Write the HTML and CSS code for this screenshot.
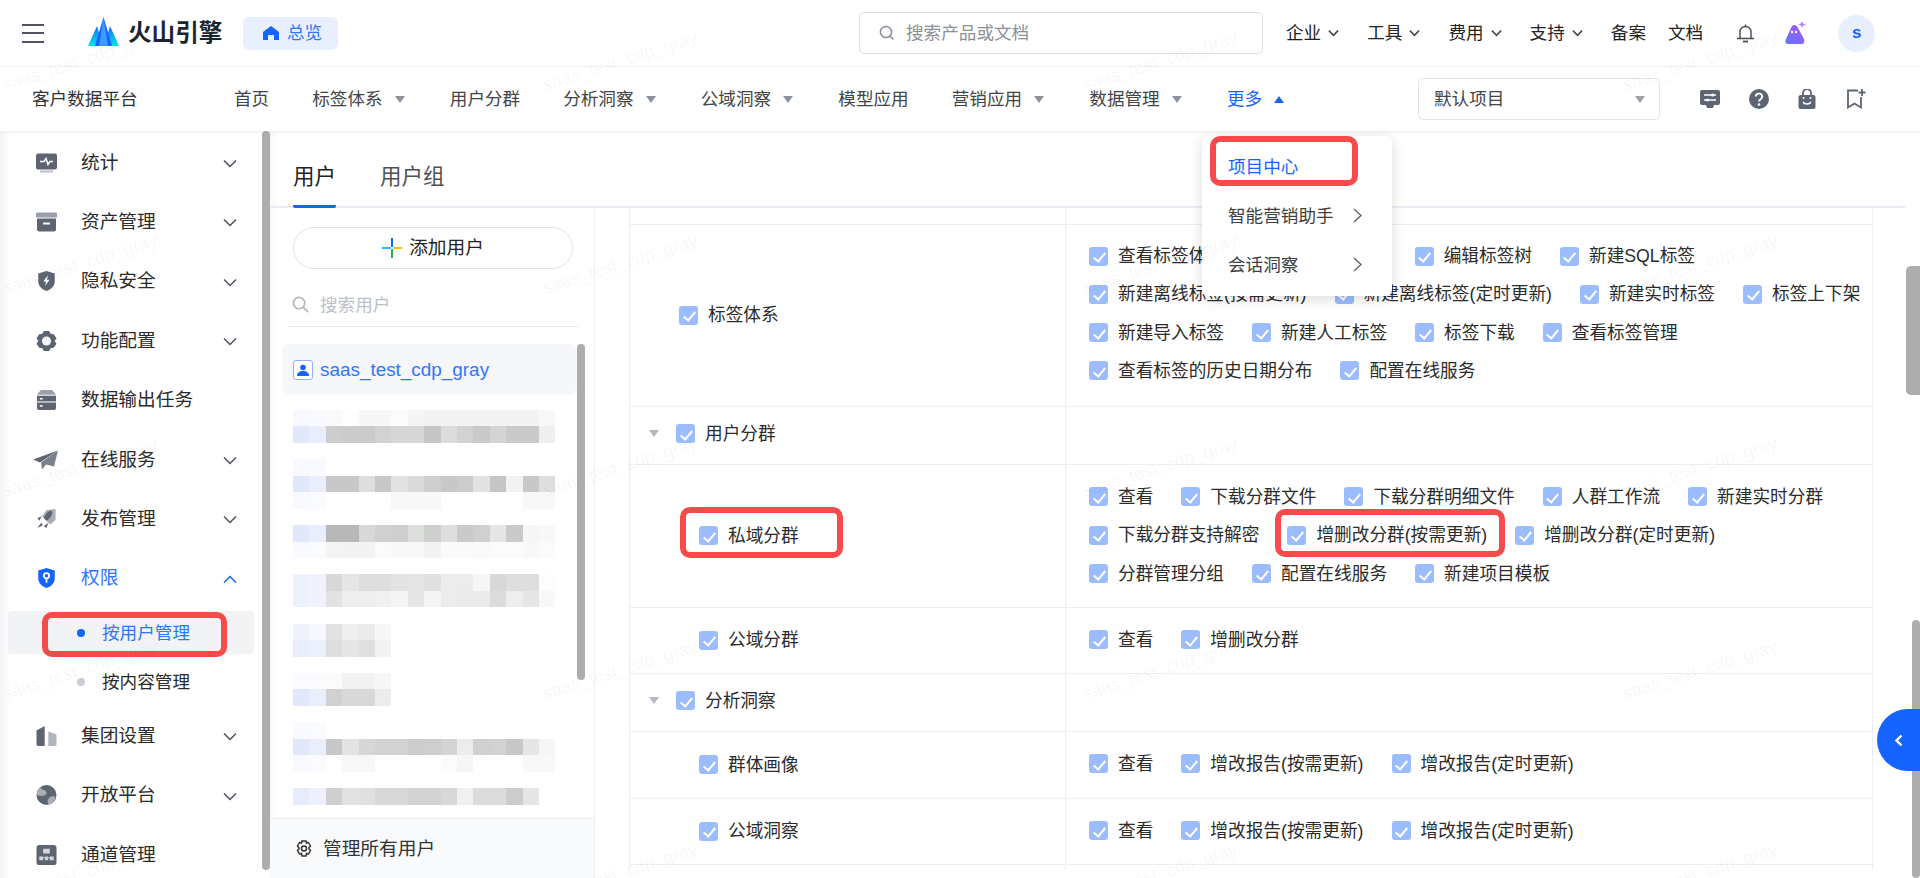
FILE: index.html
```html
<!DOCTYPE html>
<html lang="zh-CN">
<head>
<meta charset="utf-8">
<title>客户数据平台</title>
<link rel="stylesheet" href="styles.css">
</head>
<body>
<header class="top">
  <div class="burger"><i></i><i></i><i></i></div>
  <svg class="logo" viewBox="0 0 31 29"><defs><linearGradient id="lg" x1="0" y1="0" x2="0" y2="1"><stop offset="0" stop-color="#1a6dff"/><stop offset="1" stop-color="#00e5e5"/></linearGradient></defs><path d="M9 9l6 20H0z" fill="url(#lg)"/><path d="M22 9l9 20H16z" fill="url(#lg)"/><path d="M15.500 0L24 29H7z" fill="#1664ff"/><path d="M15.500 0L20 29h-9z" fill="#3b9bff"/></svg>
  <span class="brand">火山引擎</span>
  <a class="overview"><svg viewBox="0 0 16 14" class="home"><path d="M8 0l8 6v8h-5V9H5v5H0V6z" fill="#1664ff"/></svg>总览</a>
  <div class="gsearch"><svg class="gs-ico" viewBox="0 0 16 16"><circle cx="7" cy="7" r="5.600" fill="none" stroke="#878d96" stroke-width="1.500"/><path d="M11 11l3.500 3.500" stroke="#878d96" stroke-width="1.500"/></svg><span>搜索产品或文档</span></div>
  <nav class="topnav">
    <a>企业<svg class="chev" viewBox="0 0 12 8"><path d="M1 1.500l5 5 5-5" /></svg></a>
    <a>工具<svg class="chev" viewBox="0 0 12 8"><path d="M1 1.500l5 5 5-5" /></svg></a>
    <a>费用<svg class="chev" viewBox="0 0 12 8"><path d="M1 1.500l5 5 5-5" /></svg></a>
    <a>支持<svg class="chev" viewBox="0 0 12 8"><path d="M1 1.500l5 5 5-5" /></svg></a>
    <a>备案</a>
    <a class="doc">文档</a>
  </nav>
  <svg class="bell" viewBox="0 0 17 19"><path d="M3 14V8a5.500 5.500 0 0 1 11 0v6" fill="none" stroke="#444b55" stroke-width="1.400"/><path d="M0 14.500h17" stroke="#444b55" stroke-width="1.500"/><path d="M6 17.500h5" stroke="#444b55" stroke-width="1.800"/><path d="M8.500 .5v2" stroke="#444b55" stroke-width="1.400"/></svg>
  <svg class="aiico" viewBox="0 0 21 23"><defs><linearGradient id="ai" x1="0" y1="1" x2="1" y2="0"><stop offset="0" stop-color="#5a7cff"/><stop offset="1" stop-color="#b14dff"/></linearGradient></defs><path d="M9 4c2 0 3 1 4 3l6 11c1 2 0 5-2 5H3c-3 0-3-3-2-5L6 7c1-2 1.500-3 3-3z" fill="url(#ai)"/><circle cx="7" cy="11" r="1.200" fill="#fff"/><circle cx="11" cy="11" r="1.200" fill="#fff"/><path d="M17 0l1 2.500 3 1-3 1-1 2.500-1-2.500-3-1 3-1z" fill="#b67cff"/></svg>
  <div class="avatar">s</div>
</header>

<div class="subnav">
  <span class="product">客户数据平台</span>
  <ul class="menu">
    <li>首页</li>
    <li class="has">标签体系<b class="tri"></b></li>
    <li>用户分群</li>
    <li class="has">分析洞察<b class="tri"></b></li>
    <li class="has">公域洞察<b class="tri"></b></li>
    <li>模型应用</li>
    <li class="has">营销应用<b class="tri"></b></li>
    <li class="has">数据管理<b class="tri"></b></li>
    <li class="has on">更多<b class="tri up"></b></li>
  </ul>
  <div class="project"><span>默认项目</span><b class="tri big"></b></div>
  <div class="tools">
    <svg viewBox="0 0 20 20"><path d="M2 1h16a2 2 0 0 1 2 2v11a2 2 0 0 1-2 2h-4l-1 3H7l-1-3H2a2 2 0 0 1-2-2V3a2 2 0 0 1 2-2z" fill="#5d6573"/><path d="M4 6h12M4 11h12" stroke="#fff" stroke-width="1.500"/><circle cx="12.500" cy="6" r="1.500" fill="#fff"/><circle cx="7.500" cy="11" r="1.500" fill="#fff"/></svg>
    <svg viewBox="0 0 20 20"><circle cx="10" cy="10" r="10" fill="#5d6573"/><path d="M6.800 7.500a3.200 3 0 1 1 5 2.500c-1.200.8-1.800 1.300-1.800 2.600" fill="none" stroke="#fff" stroke-width="2"/><circle cx="10" cy="15.500" r="1.300" fill="#fff"/></svg>
    <svg viewBox="0 0 20 20"><path d="M6 7V4a4 4 0 0 1 8 0v3" fill="none" stroke="#5d6573" stroke-width="1.800"/><path d="M3.500 6h13a2 2 0 0 1 2 2v10a2 2 0 0 1-2 2h-13a2 2 0 0 1-2-2V8a2 2 0 0 1 2-2z" fill="#5d6573"/><path d="M6 13c1.500 2.500 6.500 2.500 8 0" fill="none" stroke="#fff" stroke-width="1.500"/><circle cx="6.500" cy="9" r="1" fill="#fff"/><circle cx="13.500" cy="9" r="1" fill="#fff"/></svg>
    <svg viewBox="0 0 20 20"><path d="M12 1.500H2v17l6.500-4 6.500 4V8" fill="none" stroke="#5d6573" stroke-width="1.800"/><path d="M16 0v7M12.500 3.500h7" stroke="#5d6573" stroke-width="1.800"/></svg>
  </div>
</div>

<main class="main">
  <aside class="side">
    <a class="si"><svg viewBox="0 0 21 19"><path d="M2 0h17a2 2 0 0 1 2 2v12a2 2 0 0 1-2 2H2a2 2 0 0 1-2-2V2a2 2 0 0 1 2-2z" fill="#5d6573"/><path d="M4 17h13v2H4z" fill="#b9bdc5"/><path d="M4 8h4l2-3 2 6 2-3h3" fill="none" stroke="#fff" stroke-width="1.500"/></svg><span>统计</span><svg class="sc" viewBox="0 0 14 9"><path d="M1 1.500l6 6 6-6"/></svg></a>
    <a class="si"><svg viewBox="0 0 21 19"><path d="M0 1a1 1 0 0 1 1-1h19a1 1 0 0 1 1 1v4H0z" fill="#9a9fa9"/><path d="M1 6h19v11a2 2 0 0 1-2 2H3a2 2 0 0 1-2-2z" fill="#5d6573"/><path d="M7 10h7v2H7z" fill="#fff"/></svg><span>资产管理</span><svg class="sc" viewBox="0 0 14 9"><path d="M1 1.500l6 6 6-6"/></svg></a>
    <a class="si"><svg viewBox="0 0 21 23"><path d="M10.500 0l9.500 3v9c0 5-4 9-9.500 11C5 21 1 17 1 12V3z" fill="#5d6573"/><path d="M12 5l-5 7h3l-1 5 5-7h-3z" fill="#fff"/></svg><span>隐私安全</span><svg class="sc" viewBox="0 0 14 9"><path d="M1 1.500l6 6 6-6"/></svg></a>
    <a class="si"><svg viewBox="0 0 22 22"><path d="M8 0h6l1.500 3 3.500.5L22 8l-2 3 2 3-3 4.500-3.500.5L14 22H8l-1.500-3-3.500-.5L0 14l2-3-2-3 3-4.500L6.500 3z" fill="#5d6573"/><circle cx="11" cy="11" r="5" fill="#f4f5f7"/></svg><span>功能配置</span><svg class="sc" viewBox="0 0 14 9"><path d="M1 1.500l6 6 6-6"/></svg></a>
    <a class="si"><svg viewBox="0 0 20 21"><path d="M4 0h12l4 5H0z" fill="#9a9fa9"/><path d="M0 6h20v6H0z" fill="#5d6573"/><path d="M0 13h20v6a2 2 0 0 1-2 2H2a2 2 0 0 1-2-2z" fill="#5d6573"/><path d="M3 8.500h3v1.500H3zM3 16h3v1.500H3z" fill="#fff"/></svg><span>数据输出任务</span></a>
    <a class="si"><svg viewBox="0 0 25 19" class="wide"><path d="M25 0L0 9l7 3z" fill="#5d6573"/><path d="M25 0L8 12l1 7 4-5 8 2z" fill="#7a808c"/></svg><span>在线服务</span><svg class="sc" viewBox="0 0 14 9"><path d="M1 1.500l6 6 6-6"/></svg></a>
    <a class="si"><svg viewBox="0 0 22 22"><path d="M21 0v12l-6 5-9-9 5-7z" fill="#a9adb5"/><path d="M17 2c1 4-1 8-6 11l-3-3c2-5 5-8 9-8z" fill="#5d6573"/><path d="M6 8l-5 2 2 3zM13 15l-2 6-3-2zM5 15l-4 6 6-3z" fill="#5d6573"/></svg><span>发布管理</span><svg class="sc" viewBox="0 0 14 9"><path d="M1 1.500l6 6 6-6"/></svg></a>
    <a class="si active"><svg viewBox="0 0 21 23"><path d="M10.500 0l9.500 3v9c0 5-4 9-9.500 11C5 21 1 17 1 12V3z" fill="#1664ff"/><circle cx="10.500" cy="9" r="3" fill="none" stroke="#fff" stroke-width="2"/><path d="M10.500 12v5" stroke="#fff" stroke-width="2"/></svg><span>权限</span><svg class="sc" viewBox="0 0 14 9"><path d="M1 7.500l6-6 6 6"/></svg></a>
    <a class="sub cur"><i></i><span>按用户管理</span></a>
    <a class="sub"><i></i><span>按内容管理</span></a>
    <a class="si"><svg viewBox="0 0 22 22"><path d="M0 5l9-5v22H2a2 2 0 0 1-2-2z" fill="#5d6573"/><path d="M13 6l9 3v11a2 2 0 0 1-2 2h-7z" fill="#b1b5bd"/></svg><span>集团设置</span><svg class="sc" viewBox="0 0 14 9"><path d="M1 1.500l6 6 6-6"/></svg></a>
    <a class="si"><svg viewBox="0 0 22 22"><circle cx="11" cy="11" r="11" fill="#5d6573"/><path d="M4 3c3 3 6 2 7 5s-3 4-6 4-4-1-5-1c0-3 2-6 4-8zM21 13c-2-1-5-1-7 1s-2 5-1 8c4-1 7-4 8-9z" fill="#a9adb5"/></svg><span>开放平台</span><svg class="sc" viewBox="0 0 14 9"><path d="M1 1.500l6 6 6-6"/></svg></a>
    <a class="si"><svg viewBox="0 0 21 21"><rect width="21" height="21" rx="3" fill="#5d6573"/><path d="M7 4h7v5H7zM3 12h4v4H3zM9 12h3v4H9zM14 12h4v4h-4z" fill="#d5d7dc"/><path d="M3 13.500h15" stroke="#d5d7dc"/></svg><span>通道管理</span></a>
    <div class="bar side-bar"></div>
  </aside>

  <section class="content">
    <div class="tabs"><a class="tab on">用户</a><a class="tab">用户组</a></div>
    <div class="pane">
      <div class="users">
        <button class="add"><svg viewBox="0 0 20 20"><path d="M9 0h2v9H9z" fill="#1664ff"/><path d="M0 9h9v2H0z" fill="#3bb4ff"/><path d="M11 9h9v2h-9z" fill="#ffc400"/><path d="M9 11h2v9H9z" fill="#36a94d"/></svg>添加用户</button>
        <div class="usearch"><svg viewBox="0 0 18 18"><circle cx="7.500" cy="7.500" r="6" fill="none" stroke="#b4b9c1" stroke-width="1.800"/><path d="M12 12l5 5" stroke="#b4b9c1" stroke-width="1.800"/></svg><span>搜索用户</span></div>
        <div class="me"><span class="uico"><svg viewBox="0 0 12 12"><circle cx="6" cy="3.500" r="2.800" fill="#1664ff"/><path d="M0 12c0-3.500 2.500-5 6-5s6 1.500 6 5z" fill="#1664ff"/></svg></span><span>saas_test_cdp_gray</span></div>
        <div class="mosaic">
          <div class="mz m1"></div><div class="mz m2"></div><div class="mz"></div>
          <div class="mz m3"></div><div class="mz m4"></div><div class="mz m5"></div><div class="mz"></div>
          <div class="mz m6"></div><div class="mz m7"></div><div class="mz"></div>
          <div class="mz m8"></div><div class="mz m9"></div><div class="mz"></div>
          <div class="mz m10"></div><div class="mz m11"></div><div class="mz"></div>
          <div class="mz m12"></div><div class="mz m13"></div><div class="mz"></div>
          <div class="mz m14"></div><div class="mz m15"></div><div class="mz m16"></div><div class="mz"></div>
          <div class="mz m17"></div>
        </div>
        <div class="bar list-bar"></div>
        <div class="manage"><svg viewBox="0 0 18 18"><path d="M7 1h4l.5 2 2-.5 2 3.500-1.500 1.500v1.500L15.500 10.500l-2 3.500-2-.5L11 16H7l-.5-2.500-2 .5-2-3.500L4 9V8L2.500 6l2-3.500 2 .5z" fill="none" stroke="#333" stroke-width="1.500"/><circle cx="9" cy="8.500" r="2.500" fill="none" stroke="#333" stroke-width="1.500"/></svg><span>管理所有用户</span></div>
      </div>

      <div class="tablewrap">
        <table class="perm">
          <colgroup><col class="c1"><col class="c2"></colgroup>
          <tr class="stub"><td></td><td></td></tr>
          <tr>
            <td class="nm tp"><label class="it"><i class="cb"></i>标签体系</label></td>
            <td class="ps first"><div class="flow">
              <label class="it"><i class="cb"></i>查看标签体系</label>
              <label class="it"><i class="cb"></i><span class="hid">查看标签树</span></label>
              <label class="it"><i class="cb"></i>编辑标签树</label>
              <label class="it"><i class="cb"></i>新建SQL标签</label>
              <label class="it"><i class="cb"></i>新建离线标签(按需更新)</label>
              <label class="it"><i class="cb"></i>新建离线标签(定时更新)</label>
              <label class="it"><i class="cb"></i>新建实时标签</label>
              <label class="it"><i class="cb"></i>标签上下架</label>
              <label class="it"><i class="cb"></i>新建导入标签</label>
              <label class="it"><i class="cb"></i>新建人工标签</label>
              <label class="it"><i class="cb"></i>标签下载</label>
              <label class="it"><i class="cb"></i>查看标签管理</label>
              <label class="it"><i class="cb"></i>查看标签的历史日期分布</label>
              <label class="it"><i class="cb"></i>配置在线服务</label>
            </div></td>
          </tr>
          <tr class="grp"><td class="nm"><div class="gline"><b class="tri gt"></b><label class="it"><i class="cb"></i>用户分群</label></div></td><td></td></tr>
          <tr>
            <td class="nm sb"><label class="it"><i class="cb"></i>私域分群</label></td>
            <td class="ps"><div class="flow">
              <label class="it"><i class="cb"></i>查看</label>
              <label class="it"><i class="cb"></i>下载分群文件</label>
              <label class="it"><i class="cb"></i>下载分群明细文件</label>
              <label class="it"><i class="cb"></i>人群工作流</label>
              <label class="it"><i class="cb"></i>新建实时分群</label>
              <label class="it"><i class="cb"></i>下载分群支持解密</label>
              <label class="it"><i class="cb"></i>增删改分群(按需更新)</label>
              <label class="it"><i class="cb"></i>增删改分群(定时更新)</label>
              <label class="it"><i class="cb"></i>分群管理分组</label>
              <label class="it"><i class="cb"></i>配置在线服务</label>
              <label class="it"><i class="cb"></i>新建项目模板</label>
            </div></td>
          </tr>
          <tr>
            <td class="nm sb"><label class="it"><i class="cb"></i>公域分群</label></td>
            <td class="ps"><div class="flow"><label class="it"><i class="cb"></i>查看</label><label class="it"><i class="cb"></i>增删改分群</label></div></td>
          </tr>
          <tr class="grp"><td class="nm"><div class="gline"><b class="tri gt"></b><label class="it"><i class="cb"></i>分析洞察</label></div></td><td></td></tr>
          <tr>
            <td class="nm sb"><label class="it"><i class="cb"></i>群体画像</label></td>
            <td class="ps tall"><div class="flow"><label class="it"><i class="cb"></i>查看</label><label class="it"><i class="cb"></i>增改报告(按需更新)</label><label class="it"><i class="cb"></i>增改报告(定时更新)</label></div></td>
          </tr>
          <tr>
            <td class="nm sb"><label class="it"><i class="cb"></i>公域洞察</label></td>
            <td class="ps"><div class="flow"><label class="it"><i class="cb"></i>查看</label><label class="it"><i class="cb"></i>增改报告(按需更新)</label><label class="it"><i class="cb"></i>增改报告(定时更新)</label></div></td>
          </tr>
          <tr class="tail"><td></td><td></td></tr>
        </table>
      </div>
    </div>
  </section>
</main>

<div class="bar page-thumb"></div>
<div class="bar page-bar"></div>
<button class="fold"><svg viewBox="0 0 9 13"><path d="M7.500 1.500l-5 5 5 5" fill="none" stroke="#fff" stroke-width="2.400"/></svg></button>

<div class="drop">
  <a class="di on">项目中心</a>
  <a class="di">智能营销助手<svg viewBox="0 0 9 15"><path d="M1 1l7 6.500-7 6.500"/></svg></a>
  <a class="di">会话洞察<svg viewBox="0 0 9 15"><path d="M1 1l7 6.500-7 6.500"/></svg></a>
</div>

<div class="mark mk1"></div>
<div class="mark mk2"></div>
<div class="mark mk3"></div>
<div class="mark mk4"></div>

<div class="wm">
  <span>saas_test_cdp_gray</span><span>saas_test_cdp_gray</span><span>saas_test_cdp_gray</span><span>saas_test_cdp_gray</span>
  <span>saas_test_cdp_gray</span><span>saas_test_cdp_gray</span><span>saas_test_cdp_gray</span><span>saas_test_cdp_gray</span>
  <span>saas_test_cdp_gray</span><span>saas_test_cdp_gray</span><span>saas_test_cdp_gray</span><span>saas_test_cdp_gray</span>
  <span>saas_test_cdp_gray</span><span>saas_test_cdp_gray</span><span>saas_test_cdp_gray</span><span>saas_test_cdp_gray</span>
  <span>saas_test_cdp_gray</span><span>saas_test_cdp_gray</span><span>saas_test_cdp_gray</span><span>saas_test_cdp_gray</span>
</div>
</body>
</html>
```

FILE: styles.css
```css
* { box-sizing: border-box; }
html, body { margin: 0; height: 878px; width: 1920px; overflow: hidden; }
body { position: relative; background: #fff; color: #2b2b2b; font: 17.6px/24px "Liberation Sans", "Noto Sans CJK SC", sans-serif; }
svg { display: block; flex: none; }
i, b { font-style: normal; }

/* top header */
.top { height: 67px; display: flex; align-items: center; padding-left: 22px; border-bottom: 1px solid #f2f3f5; }
.burger { width: 22px; height: 19px; display: flex; flex-direction: column; justify-content: space-between; }
.burger i { height: 2px; background: #505661; }
.logo { width: 31px; height: 29px; margin-left: 44px; margin-top: -3px; }
.brand { margin-left: 9px; width: 95px; flex: none; font-size: 23.600px; font-weight: 700; color: #1b2532; white-space: nowrap; }
.overview { margin-left: 20px; width: 95px; height: 33px; background: #e8f0ff; border-radius: 6px; display: flex; align-items: center; padding-left: 20px; gap: 8px; color: #2f76ff; }
.home { width: 16px; height: 14px; }
.gsearch { margin-left: 521px; width: 404px; height: 42px; border: 1px solid #dde2e9; border-radius: 5px; display: flex; align-items: center; padding-left: 19px; gap: 11px; color: #8b9098; }
.gs-ico { width: 16px; height: 16px; }
.topnav { display: flex; margin-left: 23px; gap: 28px; color: #222; }
.topnav a { display: flex; align-items: center; gap: 7px; }
.topnav .doc { margin-left: -6px; }
.chev { width: 11px; height: 8px; fill: none; stroke: #444b55; stroke-width: 1.800; }
.bell { width: 17px; height: 19px; margin-left: 34px; }
.aiico { width: 21px; height: 23px; margin-left: 31px; margin-top: -2px; }
.avatar { width: 37px; height: 37px; margin-left: 32px; border-radius: 50%; background: #e8f0ff; color: #1664ff; font-weight: 700; font-size: 17px; display: flex; align-items: center; justify-content: center; }

/* second nav */
.subnav { position: relative; z-index: 2; height: 64px; display: flex; align-items: center; padding-left: 32px; color: #424548; background: #fff; box-shadow: 0 2px 3px rgba(0, 0, 0, .05); }
.product { width: 202px; flex: none; color: #333; }
.menu { display: flex; list-style: none; margin: 0; padding: 0; width: 1184px; flex: none; }
.menu li { margin-right: 43px; display: flex; align-items: center; white-space: nowrap; }
.menu li.has { margin-right: 45.200px; }
.menu li.on { color: #1664ff; }
.tri { display: block; width: 0; height: 0; margin-left: 12px; border-left: 5px solid transparent; border-right: 5px solid transparent; border-top: 7px solid #8d939c; }
.tri.up { border-top: 0; border-bottom: 7px solid #1664ff; }
.tri.big { margin-left: 0; border-left-width: 5.500px; border-right-width: 5.500px; border-top-width: 7px; border-top-color: #9a9fa7; }
.project { width: 242px; height: 42px; flex: none; border: 1px solid #e2e4e9; border-radius: 5px; display: flex; align-items: center; justify-content: space-between; padding: 0 14px 0 15px; }
.tools { display: flex; gap: 28.600px; margin-left: 40px; }
.tools svg { width: 20px; height: 20px; }

/* main */
.main { display: flex; height: 747px; }
.side { position: relative; width: 270px; flex: none; padding-top: 2px; background: linear-gradient(90deg, #f3f4f7, #fff 10px); }
.si { height: 59.400px; display: flex; align-items: center; position: relative; padding-left: 36px; font-size: 18.700px; color: #2b2b2b; }
.si > svg:first-child { width: 21px; height: 20px; }
.si > svg.wide { width: 25px; margin-left: -3px; margin-right: -1px; }
.si span { margin-left: 24px; }
.sc { position: absolute; left: 223px; top: 26px; width: 14px; height: 9px; fill: none; stroke: #4a505a; stroke-width: 1.500; }
.si.active { color: #2f76ff; }
.si.active .sc { stroke: #1664ff; }
.sub { height: 49px; display: flex; align-items: center; padding-left: 77px; position: relative; z-index: 0; }
.sub i { width: 8px; height: 8px; border-radius: 50%; background: #c9cdd6; }
.sub span { margin-left: 17px; }
.sub.cur { color: #2f76ff; }
.sub.cur i { background: #1664ff; }
.sub.cur::before { content: ""; position: absolute; z-index: -1; left: 8px; top: 3px; width: 246px; height: 43px; background: #f2f3f5; border-radius: 4px; }

.bar { position: absolute; background: #adadad; border-radius: 4px; }
.side-bar { left: 262px; top: 0; width: 8px; height: 739px; }
.list-bar { left: 307px; top: 136px; width: 8px; height: 336px; }
.page-thumb { right: 0; top: 266px; width: 14px; height: 129px; border-radius: 5px 0 0 5px; }
.page-bar { right: 0; top: 620px; width: 8px; height: 258px; }

/* content */
.content { flex: 1; display: flex; flex-direction: column; min-width: 0; background: linear-gradient(90deg, #f8f8f9, #fff 8px); }
.tabs { height: 77px; width: 1635px; flex: none; display: flex; align-items: flex-end; padding-left: 23px; gap: 44px; border-bottom: 2px solid #e9edf3; font-size: 21.500px; }
.tab { height: 77px; line-height: 93px; color: #4d5157; margin-bottom: -2px; }
.tab.on { color: #222; border-bottom: 3px solid #1664ff; border-radius: 0 0 2px 2px; }
.pane { flex: 1; display: flex; min-height: 0; }

/* users panel */
.users { position: relative; width: 325px; flex: none; border-right: 1px solid #eef0f3; display: flex; flex-direction: column; }
.add { margin: 19px 0 0 23px; width: 280px; height: 42px; border: 1px solid #e0e3e8; border-radius: 21px; background: #fff; font: inherit; font-size: 18.700px; color: #222; display: flex; align-items: center; justify-content: center; gap: 7px; padding: 0; }
.add svg { width: 20px; height: 20px; }
.usearch { margin: 14px 15px 0 18px; height: 44px; border-bottom: 1px solid #e8ebf0; display: flex; align-items: center; padding-left: 4px; gap: 11px; color: #bcc1c9; }
.usearch svg { width: 17px; height: 17px; }
.me { margin: 17px 17px 0 12px; height: 51px; background: #f5f7fa; border-radius: 8px; display: flex; align-items: center; padding-left: 11px; gap: 7px; color: #2f76ff; font-size: 18.900px; }
.uico { width: 20px; height: 20px; border: 1px solid #8fb4ff; border-radius: 3px; background: #fff; display: flex; align-items: center; justify-content: center; }
.uico svg { width: 12px; height: 12px; }
.mosaic { margin: 15px 0 0 23px; width: 262px; height: 408px; overflow: hidden; flex: none; }
.mz { height: 16.440px; }
.m1 { background: linear-gradient(90deg,#f8f9ff 16px,#f9faff 0 33px,#fafafa 0 49px,#fdfdfd 0 66px,#f7f7f7 0 98px,#fbfbfb 0 115px,#f5f5f5 0 131px,#f3f3f3 0 246px,#f8f8f8 0 262px); }
.m2 { background: linear-gradient(90deg,#e2e8fb 16px,#eaeefc 0 33px,#cdcdcd 0 49px,#cbcbcb 0 82px,#d2d2d2 0 98px,#d6d6d6 0 131px,#c6c6c6 0 148px,#dcdcdc 0 164px,#d2d2d2 0 180px,#cacaca 0 197px,#d4d4d4 0 213px,#cacaca 0 246px,#efefef 0 262px); }
.m3 { background: linear-gradient(90deg,#f8f9ff 16px,#f9faff 0 33px,#fff 0); }
.m4 { background: linear-gradient(90deg,#e2e8fb 16px,#eaeefc 0 33px,#c8c8c8 0 66px,#dedede 0 82px,#c8c8c8 0 98px,#e2e2e2 0 115px,#dadada 0 131px,#cecece 0 148px,#c8c8c8 0 164px,#ccc 0 180px,#e2e2e2 0 197px,#c6c6c6 0 213px,#f2f2f2 0 230px,#c8c8c8 0 246px,#dedede 0 262px); }
.m5 { background: linear-gradient(90deg,#f9faff 16px,#fafbff 0 33px,#fff 0 98px,#f8f8f8 0 148px,#fff 0 230px,#f8f8f8 0 262px); }
.m6 { background: linear-gradient(90deg,#e2e8fb 16px,#eaeefc 0 33px,#b8b8b8 0 66px,#d8d8d8 0 82px,#d0d0d0 0 98px,#cecece 0 115px,#dcdedc 0 131px,#ced0ce 0 148px,#dedede 0 164px,#cacaca 0 180px,#d0d0d0 0 197px,#e6e6e6 0 213px,#cacaca 0 230px,#f6f6f6 0 246px,#f8f8f8 0 262px); }
.m7 { background: linear-gradient(90deg,#f9faff 16px,#fafbff 0 33px,#f4f4f4 0 49px,#f3f3f3 0 82px,#fbfbfb 0 98px,#f8f8f8 0 131px,#f3f3f3 0 148px,#fafafa 0 180px,#f9f9f9 0 197px,#fbfbfb 0 230px,#f8f8f8 0 246px,#fbfbfb 0 262px); }
.m8 { background: linear-gradient(90deg,#edf1fd 16px,#f0f3fe 0 33px,#d8d8d8 0 49px,#e6e6e6 0 66px,#dedede 0 98px,#e4e4e4 0 115px,#e6e6e6 0 131px,#e0e0e0 0 148px,#ececec 0 180px,#f6f6f6 0 197px,#d8d8d8 0 213px,#dedede 0 246px,#fdfdfd 0 262px); }
.m9 { background: linear-gradient(90deg,#edf1fd 16px,#f0f3fe 0 33px,#e2e2e2 0 49px,#eee 0 82px,#f0f0f0 0 98px,#f4f4f4 0 115px,#e6e6e6 0 131px,#f4f4f4 0 148px,#ececec 0 164px,#eaeaea 0 197px,#dcdcdc 0 213px,#eee 0 230px,#e6e6e6 0 246px,#f8f8f8 0 262px); }
.m10 { background: linear-gradient(90deg,#f0f3fe 16px,#f6f7ff 0 33px,#e2e2e2 0 49px,#efefef 0 66px,#ebebeb 0 82px,#f6f6f6 0 98px,#fff 0); }
.m11 { background: linear-gradient(90deg,#e8eefc 16px,#ecf0fd 0 33px,#dedede 0 49px,#e6e6e6 0 66px,#e0e0e0 0 82px,#f2f2f2 0 98px,#fff 0); }
.m12 { background: linear-gradient(90deg,#fbfbff 33px,#fbfbfb 0 49px,#f2f2f2 0 82px,#f7f7f7 0 98px,#fff 0); }
.m13 { background: linear-gradient(90deg,#e2e8fb 16px,#eaeefc 0 33px,#d0d0d0 0 49px,#d8d8d8 0 82px,#ececec 0 98px,#fff 0); }
.m14 { background: linear-gradient(90deg,#f9faff 16px,#fafbff 0 33px,#fff 0); }
.m15 { background: linear-gradient(90deg,#e2e8fb 16px,#eaeefc 0 33px,#c8c8c8 0 49px,#e2e4e2 0 66px,#d6d6d6 0 82px,#d2d2d2 0 115px,#ccc 0 131px,#cecece 0 148px,#d4d4d4 0 164px,#ececec 0 180px,#d0d0d0 0 197px,#d2d2d2 0 213px,#c8c8c8 0 230px,#e6e6e6 0 246px,#f6f6f6 0 262px); }
.m16 { background: linear-gradient(90deg,#f9faff 16px,#fbfbff 0 33px,#fff 0 49px,#f8f8f8 0 82px,#fff 0 148px,#fbfbfb 0 164px,#f6f6f6 0 180px,#fff 0 230px,#f8f8f8 0 262px); }
.m17 { background: linear-gradient(90deg,#e6ecfc 16px,#eef1fd 0 33px,#cfcfcf 0 49px,#e2e2e2 0 66px,#e0e0e0 0 82px,#d8d8d8 0 115px,#d2d2d2 0 148px,#d8d8d8 0 164px,#f0f0f0 0 180px,#dcdcdc 0 213px,#ccc 0 230px,#e6e6e6 0 246px,#fff 0); }
.manage { margin-top: auto; height: 60px; background: #f8fafc; border-top: 1px solid #eaecf0; display: flex; align-items: center; padding-left: 25px; gap: 10px; color: #333; font-size: 18.700px; }
.manage svg { width: 18px; height: 18px; }

/* permission table */
.tablewrap { padding-left: 34px; height: 662px; overflow: hidden; }
.perm { table-layout: fixed; width: 1244px; border-collapse: separate; border-spacing: 0; font-size: 17.680px; }
.c1 { width: 437px; }
.c2 { width: 807px; }
.perm td { padding: 0; border-bottom: 1px solid #eceef2; border-right: 1px solid #eceef2; vertical-align: middle; }
.perm td:first-child { border-left: 1px solid #eceef2; }
.stub td { height: 17px; }
.grp td { height: 58px; }
.tail td { height: 6px; border-bottom: 0; }
.nm { color: #2b2b2b; }
.tp { padding-left: 49px !important; }
.sb { padding-left: 69px !important; }
.grp .nm { padding: 0 0 3px 19px !important; }
.gline { display: flex; align-items: center; gap: 17px; }
.gt { margin-left: 0; border-top-color: #b5b8c0; }
.ps { padding: 20px 8px 21px 23px !important; }
.ps.first { padding-top: 19px !important; padding-bottom: 23px !important; }
.ps.tall { padding-bottom: 22px !important; }
.flow { display: flex; flex-wrap: wrap; gap: 14.330px 28px; }
.it { display: flex; align-items: center; gap: 10px; white-space: nowrap; height: 24px; }
.hid { display: block; width: 105.600px; overflow: hidden; }
.cb { position: relative; width: 19px; height: 19px; flex: none; background: #9bbcff; border-radius: 3px; }
.cb::after { content: ""; position: absolute; left: 6.500px; top: 3.500px; width: 5px; height: 10px; border: solid #fff; border-width: 0 2px 2px 0; transform: rotate(40deg); }

/* floating */
.fold { position: absolute; right: 0; top: 709px; width: 43px; height: 62px; border: 0; padding: 0 0 0 17px; border-radius: 31px 0 0 31px; background: #1664ff; z-index: 3; }
.fold svg { width: 9px; height: 13px; }
.drop { position: absolute; left: 1202px; top: 136px; width: 190px; height: 160px; background: #fff; border-radius: 6px; box-shadow: 0 3px 14px rgba(0, 0, 0, .14); padding-top: 6px; z-index: 4; }
.di { height: 49px; display: flex; align-items: center; justify-content: space-between; padding: 0 30px 0 26px; color: #3d3f43; }
.di.on { color: #1664ff; }
.di svg { width: 9px; height: 15px; fill: none; stroke: #62676f; stroke-width: 1.500; }
.mark { position: absolute; border: 6px solid #f74a4a; border-radius: 10px; z-index: 5; }
.mk1 { left: 42px; top: 612px; width: 185px; height: 45px; }
.mk2 { left: 1210px; top: 136px; width: 148px; height: 50px; }
.mk3 { left: 680px; top: 507px; width: 163px; height: 51px; }
.mk4 { left: 1275px; top: 509px; width: 230px; height: 48px; }
.wm { position: absolute; left: -190px; top: -41px; width: 2160px; display: grid; grid-template-columns: repeat(4, 540px); grid-auto-rows: 203px; pointer-events: none; z-index: 6; font-size: 18px; color: rgba(0, 0, 0, .045); }
.wm span { display: flex; align-items: center; justify-content: center; transform: rotate(-17.500deg); }
```
